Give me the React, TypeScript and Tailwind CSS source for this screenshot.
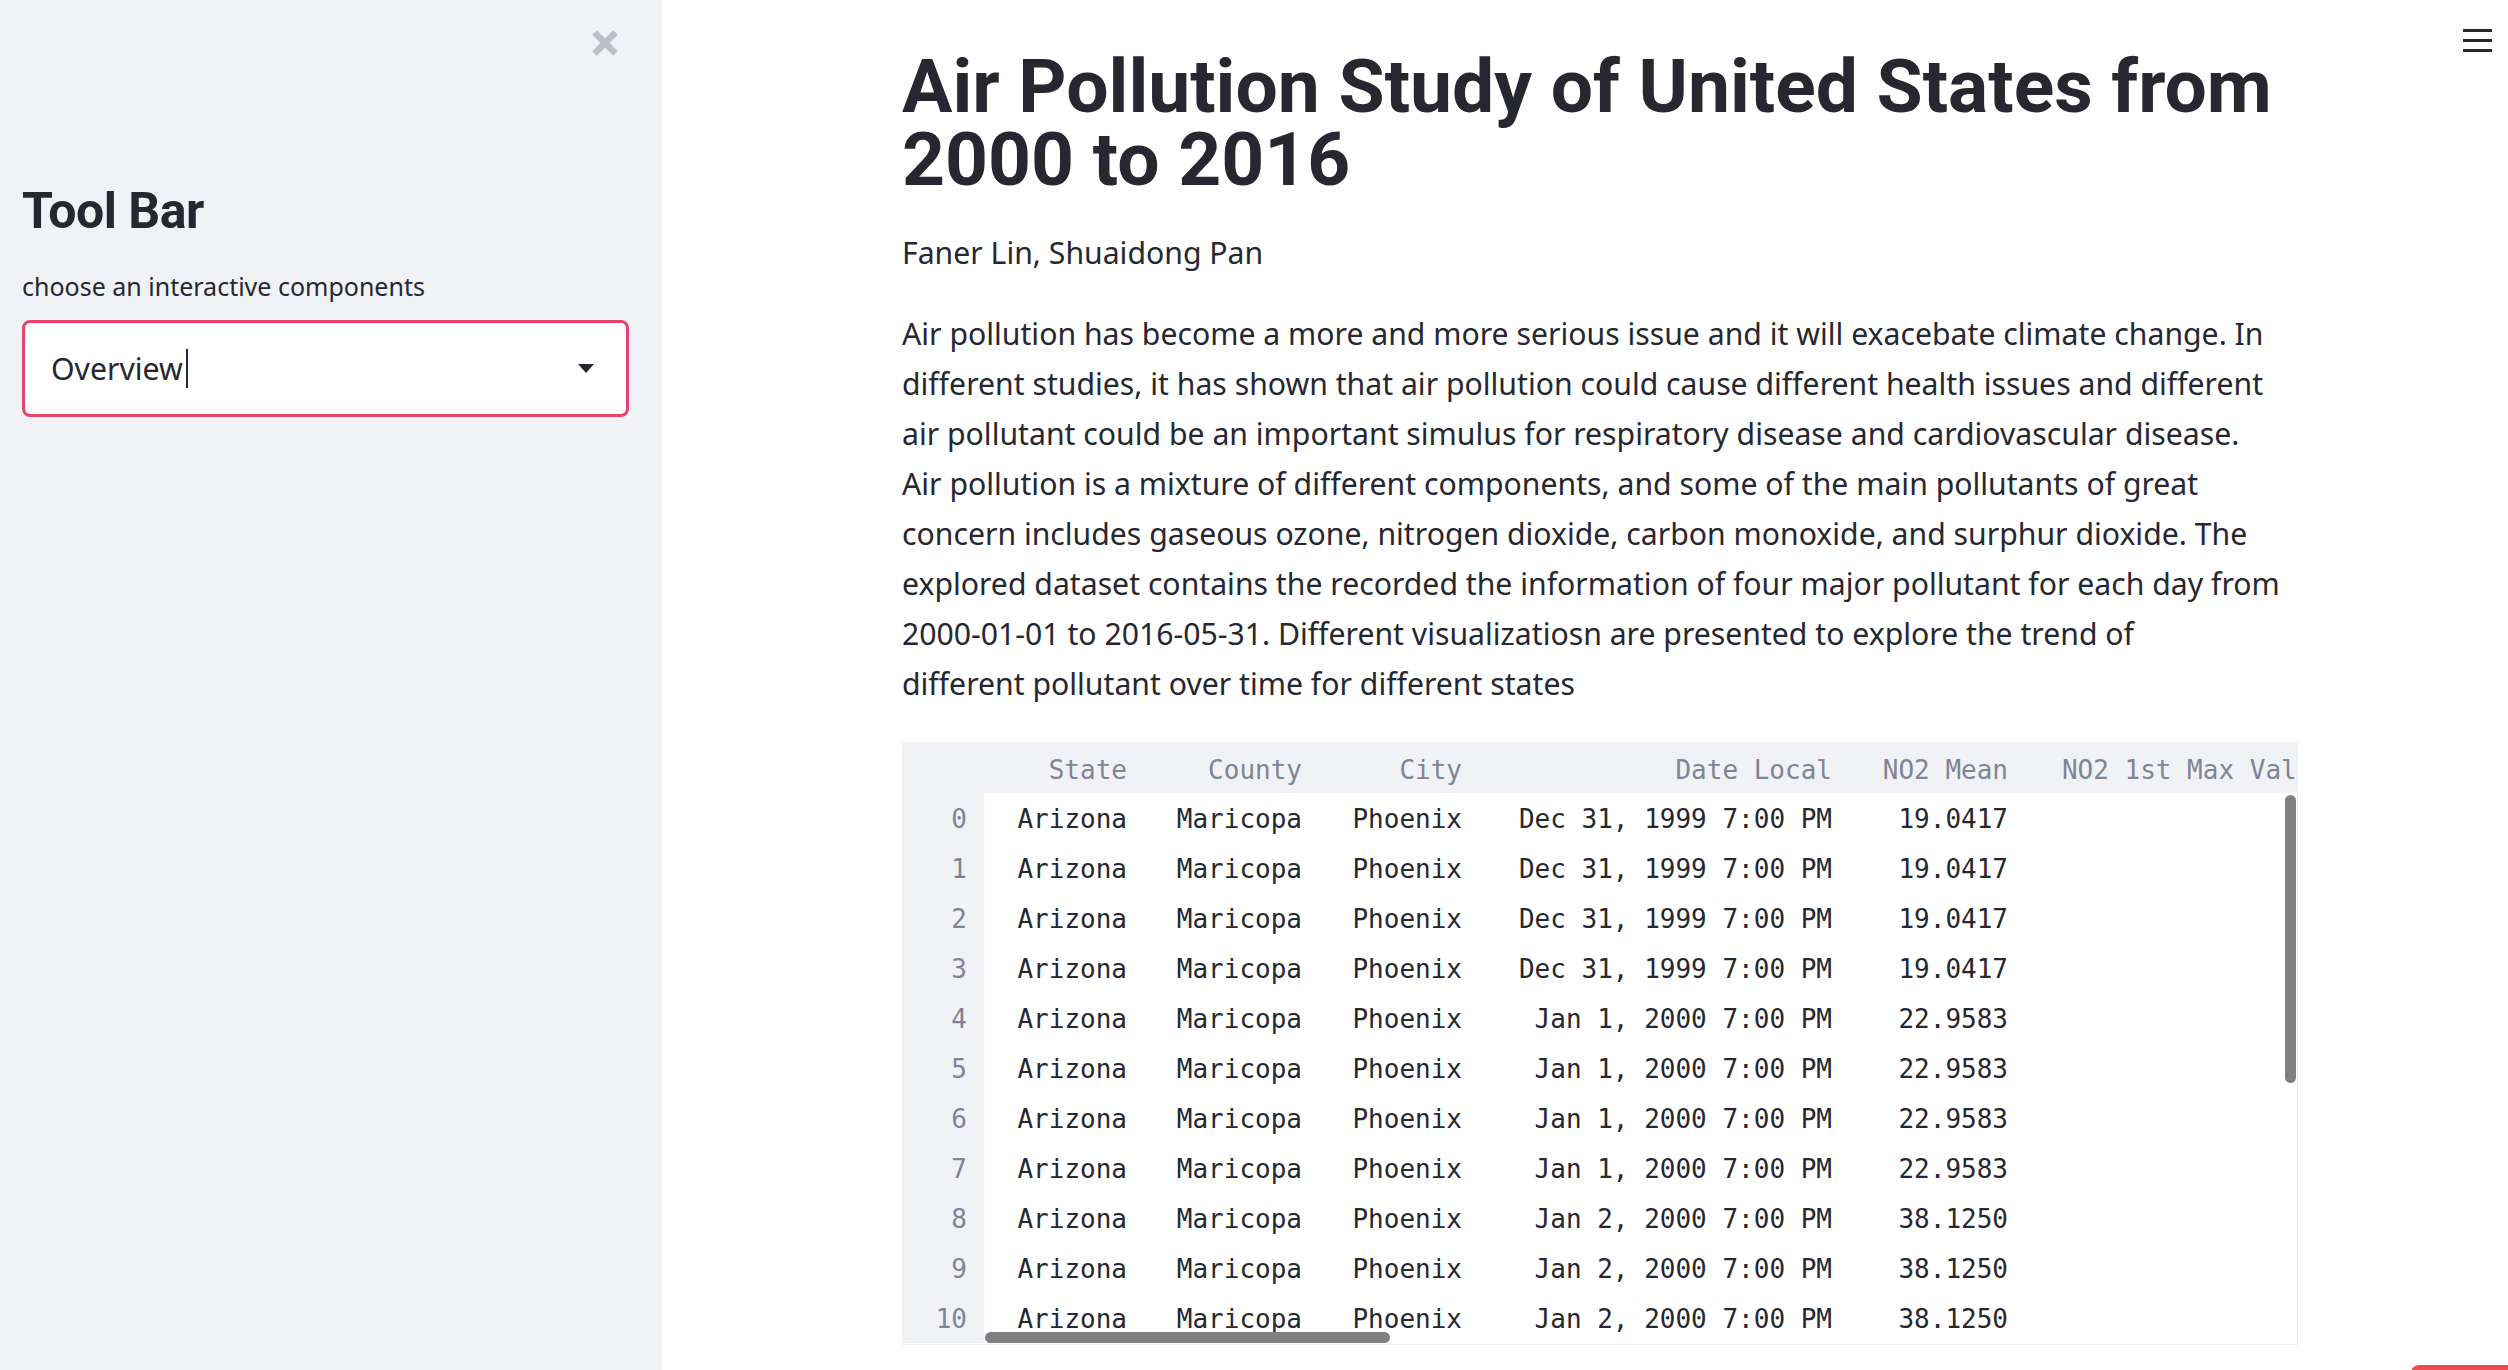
import React from "react";

const rows = [
  ["Arizona", "Maricopa", "Phoenix", "Dec 31, 1999 7:00 PM", "19.0417"],
  ["Arizona", "Maricopa", "Phoenix", "Dec 31, 1999 7:00 PM", "19.0417"],
  ["Arizona", "Maricopa", "Phoenix", "Dec 31, 1999 7:00 PM", "19.0417"],
  ["Arizona", "Maricopa", "Phoenix", "Dec 31, 1999 7:00 PM", "19.0417"],
  ["Arizona", "Maricopa", "Phoenix", "Jan 1, 2000 7:00 PM", "22.9583"],
  ["Arizona", "Maricopa", "Phoenix", "Jan 1, 2000 7:00 PM", "22.9583"],
  ["Arizona", "Maricopa", "Phoenix", "Jan 1, 2000 7:00 PM", "22.9583"],
  ["Arizona", "Maricopa", "Phoenix", "Jan 1, 2000 7:00 PM", "22.9583"],
  ["Arizona", "Maricopa", "Phoenix", "Jan 2, 2000 7:00 PM", "38.1250"],
  ["Arizona", "Maricopa", "Phoenix", "Jan 2, 2000 7:00 PM", "38.1250"],
  ["Arizona", "Maricopa", "Phoenix", "Jan 2, 2000 7:00 PM", "38.1250"],
];

const paragraphLines = [
  "Air pollution has become a more and more serious issue and it will exacebate climate change. In",
  "different studies, it has shown that air pollution could cause different health issues and different",
  "air pollutant could be an important simulus for respiratory disease and cardiovascular disease.",
  "Air pollution is a mixture of different components, and some of the main pollutants of great",
  "concern includes gaseous ozone, nitrogen dioxide, carbon monoxide, and surphur dioxide. The",
  "explored dataset contains the recorded the information of four major pollutant for each day from",
  "2000-01-01 to 2016-05-31. Different visualizatiosn are presented to explore the trend of",
  "different pollutant over time for different states",
];

function Sidebar() {
  return (
    <aside className="w-[662px] shrink-0 bg-[#f0f2f6] min-h-[1370px] font-['Noto_Sans',sans-serif] text-[#262730]">
      <div className="flex justify-end pt-[29px] pr-[43px]">
        <svg width="28" height="28" viewBox="0 0 28 28">
          <path d="M3.5 3.5 L24.5 24.5 M24.5 3.5 L3.5 24.5" stroke="#bcbfc6" strokeWidth="6.5" strokeLinecap="butt" />
        </svg>
      </div>
      <div className="px-[22px]">
        <h2 className="mt-[124px] text-[50px] leading-[60px] font-bold tracking-[-0.5px] font-['Roboto',sans-serif]">Tool Bar</h2>
        <div className="mt-[27px] text-[25px] leading-[36px]">choose an interactive components</div>
        <div className="mt-[16px] h-[97px] w-[607px] rounded-[8px] border-[3px] border-[#e8436a] bg-white flex items-center pl-[26px] pr-[32px]">
          <span className="text-[30.2px] leading-[40px]">Overview</span>
          <span className="ml-[3px] w-[2px] h-[39px] bg-[#262730]" />
          <div className="flex-1" />
          <svg width="16" height="9" viewBox="0 0 16 9">
            <path d="M0 0 L16 0 L8 9 Z" fill="#262730" />
          </svg>
        </div>
      </div>
    </aside>
  );
}

const colWidths = [162, 175, 160, 370, 176, 320];
const headers = ["State", "County", "City", "Date Local", "NO2 Mean", "NO2 1st Max Value"];

function DataTable() {
  return (
    <div className="relative w-[1396px] h-[603px] overflow-hidden bg-white font-['DejaVu_Sans_Mono',monospace] text-[26px] border-r border-b border-[#eceef3]">
      <div className="flex h-[51px] bg-[#f0f2f6] text-[#808495] whitespace-nowrap">
        <div className="w-[82px] shrink-0" />
        {headers.map((h, i) => (
          <div
            key={h}
            className="shrink-0 flex items-center justify-end pr-[19px] pt-[6px]"
            style={{ width: colWidths[i] }}
          >
            {h}
          </div>
        ))}
      </div>
      {rows.map((r, idx) => (
        <div key={idx} className="flex h-[50px] whitespace-nowrap">
          <div className="w-[82px] shrink-0 bg-[#f0f2f6] text-[#808495] flex items-center justify-end pr-[17px] pt-[3px]">
            {idx}
          </div>
          {r.map((c, i) => (
            <div
              key={i}
              className="shrink-0 flex items-center justify-end pr-[19px] pt-[3px] text-[#262730]"
              style={{ width: colWidths[i] }}
            >
              {c}
            </div>
          ))}
          <div className="shrink-0 w-[320px]" />
        </div>
      ))}
      <div className="absolute left-[83px] top-[590px] w-[405px] h-[11px] rounded-full bg-[#808080]" />
      <div className="absolute left-[1383px] top-[53px] w-[11px] h-[288px] rounded-full bg-[#808080]" />
    </div>
  );
}

function Main() {
  return (
    <main className="relative flex-1 min-h-[1370px] bg-white font-['Noto_Sans',sans-serif] text-[#262730]">
      <div className="absolute top-[29px] left-[1801px] w-[29px] flex flex-col gap-[7px]">
        <div className="h-[3px] bg-[#262730]" />
        <div className="h-[3px] bg-[#262730]" />
        <div className="h-[3px] bg-[#262730]" />
      </div>
      <div className="pl-[240px] pt-[50px] w-[1636px]">
        <h1 className="text-[75px] leading-[73px] font-bold font-['Roboto',sans-serif] whitespace-nowrap">
          Air Pollution Study of United States from
          <br />
          2000 to 2016
        </h1>
        <p className="mt-[32px] text-[30.2px] leading-[50px]">Faner Lin, Shuaidong Pan</p>
        <p className="mt-[31px] text-[30.2px] leading-[50px] whitespace-nowrap">
          {paragraphLines.map((l, i) => (
            <React.Fragment key={i}>
              {l}
              {i < paragraphLines.length - 1 && <br />}
            </React.Fragment>
          ))}
        </p>
        <div className="mt-[33px]">
          <DataTable />
        </div>
      </div>
      <div className="absolute left-[1749px] top-[1365px] w-[110px] h-[20px] rounded-[8px] bg-[#ef4b4f]" />
    </main>
  );
}

export default function App() {
  return (
    <div className="flex w-[2508px] h-[1370px] overflow-hidden">
      <Sidebar />
      <Main />
    </div>
  );
}
